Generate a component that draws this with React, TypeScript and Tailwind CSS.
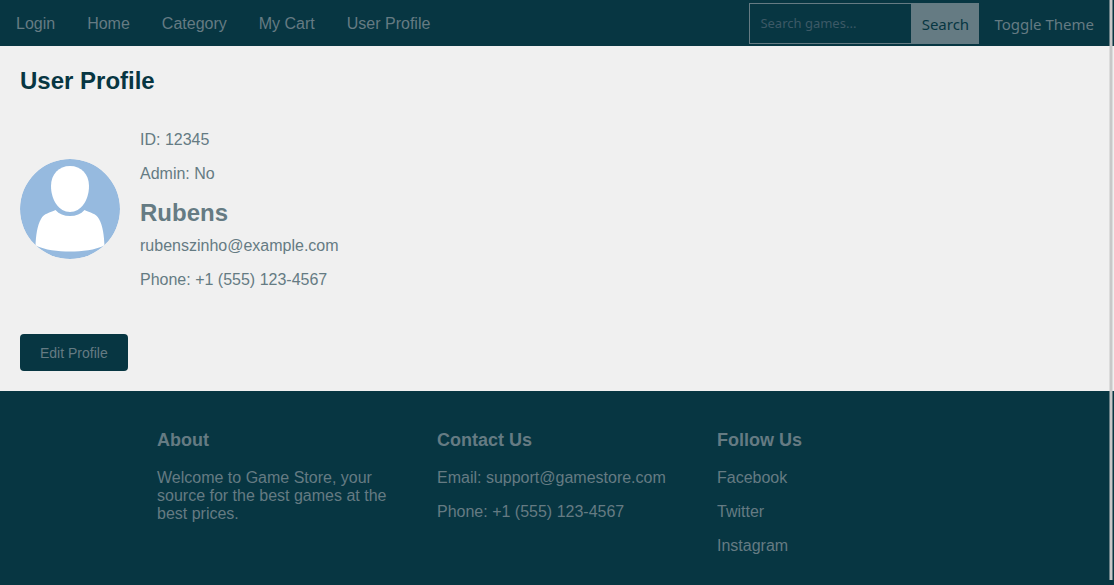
const navLinks = ['Login', 'Home', 'Category', 'My Cart', 'User Profile'];
const socialLinks = ['Facebook', 'Twitter', 'Instagram'];

function Header() {
  return (
    <header className="flex h-[46px] items-center justify-between bg-[#073642]">
      <nav className="flex gap-8 px-4 pt-0.5">
        {navLinks.map((label) => (
          <a key={label} href="#">{label}</a>
        ))}
      </nav>
      <div className="flex items-center gap-[15px] pr-5 font-['Noto_Sans',sans-serif] text-[15px]">
        <form className="flex h-[41px]" onSubmit={(e) => e.preventDefault()}>
          <input
            type="text"
            aria-label="Search games"
            placeholder="Search games..."
            className="w-[162px] border border-r-0 border-[#657b83] bg-transparent px-2.5 text-[13px] outline-none placeholder:text-[#3c5966]"
          />
          <button type="submit" className="w-[68px] bg-[#657b83] pt-0.5 text-[#073642]">Search</button>
        </form>
        <button type="button" className="pt-0.5">Toggle Theme</button>
      </div>
    </header>
  );
}

function Avatar() {
  return (
    <svg viewBox="0 0 100 100" className="size-[100px] shrink-0 rounded-full" role="img" aria-label="Profile picture">
      <circle cx="50" cy="50" r="50" fill="#96badf" />
      <path
        d="M50 7C61 7 69 15 69 27C69 41 61 53 50 53C39 53 31 41 31 27C31 15 39 7 50 7Z"
        fill="#fff"
      />
      <path
        d="M35.5 51C39 55 44 57 50 57C56 57 61 55 64.5 51C70 54 76 54 79 60C83 67 84 77 84.5 86.5C75 91 62 92.500 50 92.5C38 92.5 25 91 15.5 86.5C16 77 17 67 21 60C24 54 30 54 35.5 51Z"
        fill="#fff"
      />
    </svg>
  );
}

export default function App() {
  return (
    <div className="relative flex min-h-screen flex-col bg-[#073642] font-['Liberation_Sans',Arial,sans-serif] text-base leading-[18px] text-[#657b83]">
      <Header />
      <main className="bg-[#f0f0f0] px-5 pt-[21px] pb-5">
        <h1 className="text-2xl leading-7 font-bold text-[#073642]">User Profile</h1>
        <section className="mt-[34px] mb-[45px] flex items-center gap-5">
          <Avatar />
          <div className="pt-0.5">
            <p className="mb-4">ID: 12345</p>
            <p className="mb-4">Admin: No</p>
            <h2 className="mb-2.5 text-2xl leading-7 font-bold">Rubens</h2>
            <p className="mb-4">rubenszinho@example.com</p>
            <p>Phone: +1 (555) 123-4567</p>
          </div>
        </section>
        <button type="button" className="block rounded bg-[#073642] px-5 pt-[11px] pb-[9px] text-sm leading-[17px]">
          Edit Profile
        </button>
      </main>
      <footer className="mx-auto grid w-full max-w-[840px] grid-cols-3 pt-[38px] pb-[30px]">
        <section className="px-5">
          <h3 className="mb-[18px] text-lg leading-[22px] font-bold">About</h3>
          <p>Welcome to Game Store, your source for the best games at the best prices.</p>
        </section>
        <section className="px-5">
          <h3 className="mb-[18px] text-lg leading-[22px] font-bold">Contact Us</h3>
          <p className="mb-4">Email: support@gamestore.com</p>
          <p>Phone: +1 (555) 123-4567</p>
        </section>
        <section className="px-5">
          <h3 className="mb-[18px] text-lg leading-[22px] font-bold">Follow Us</h3>
          <ul className="space-y-4">
            {socialLinks.map((label) => (
              <li key={label}><a href="#">{label}</a></li>
            ))}
          </ul>
        </section>
      </footer>
      <div aria-hidden="true" className="absolute top-0 right-px bottom-[5px] w-1 border-x border-[#c8c8c8]/50 bg-[#c8c8c8] bg-clip-padding" />
    </div>
  );
}
